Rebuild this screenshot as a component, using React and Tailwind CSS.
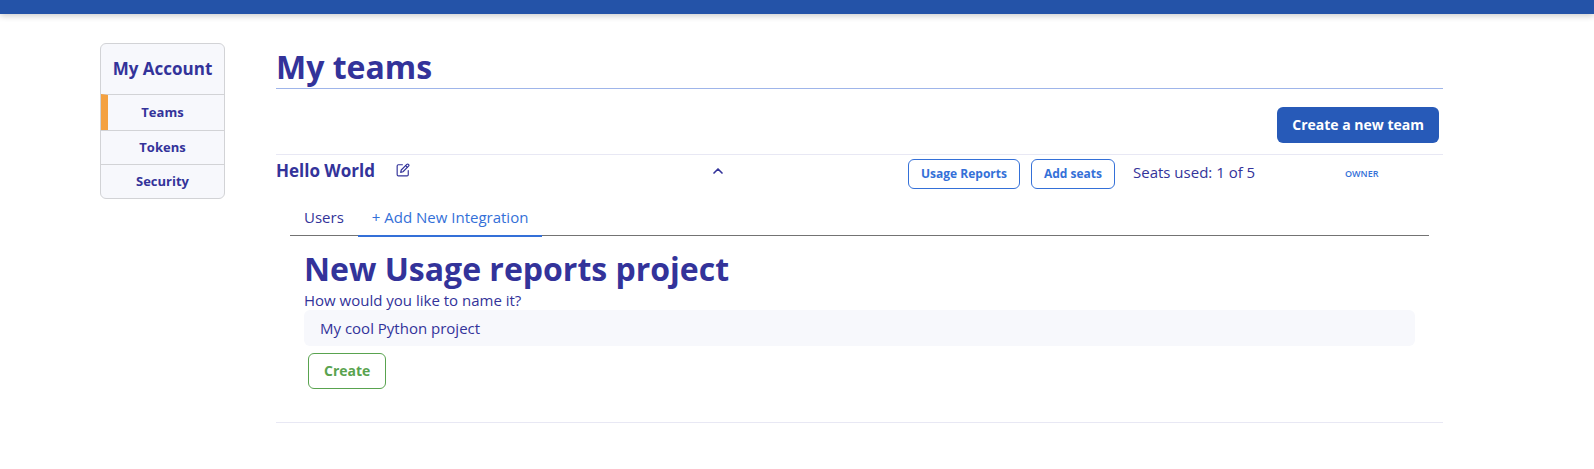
import { ChevronUp } from "lucide-react";

const accountLinks = [
  { label: "Teams", active: true },
  { label: "Tokens", active: false },
  { label: "Security", active: false },
];

function EditIcon() {
  return (
    <svg viewBox="0 0 24 24" className="size-[14px]" fill="none" stroke="currentColor" strokeWidth="2" strokeLinecap="round" strokeLinejoin="round" aria-hidden="true">
      <path d="M11 3H4a2 2 0 0 0-2 2v15a2 2 0 0 0 2 2h15a2 2 0 0 0 2-2v-7" />
      <path d="M18.500 2.500a2.120 2.120 0 0 1 3 3L12 15l-4 1 1-4 9.500-9.500z" />
      <path d="M16.500 4.500l3 3" />
    </svg>
  );
}

function Sidebar() {
  return (
    <nav aria-label="My Account" className="w-[125px] shrink-0 overflow-hidden rounded-md border border-[#d2d3d6] bg-[#f7f8fc] text-center font-bold">
      <h2 className="py-3 text-[17px] leading-[26px]">My Account</h2>
      {accountLinks.map(({ label, active }) => (
        <a
          key={label}
          href="#"
          aria-current={active ? "page" : undefined}
          className={
            active
              ? "block border-t border-l-[7px] border-t-[#d2d3d6] border-l-[#f4a140] py-[7px] pr-[7px] text-[13px] leading-[21px]"
              : "block border-t border-[#d2d3d6] py-[6px] text-[13px] leading-[21px]"
          }
        >
          {label}
        </a>
      ))}
    </nav>
  );
}

function TeamRow() {
  return (
    <div className="grid h-[38px] grid-cols-[434fr_198fr_225fr_210fr_100fr] items-center">
      <div className="flex items-center gap-[21px] pb-[6px]">
        <h2 className="text-[17px] font-bold leading-[26px]">Hello World</h2>
        <button type="button" aria-label="Rename team" className="pb-[3px]">
          <EditIcon />
        </button>
      </div>
      <button type="button" aria-label="Collapse team" className="justify-self-start pb-[6px]">
        <ChevronUp size={16} strokeWidth={2.5} />
      </button>
      <div className="flex gap-[11px] text-xs font-bold text-[#3470d8]">
        <button type="button" className="h-[30px] rounded-md border border-[#3470d8] px-3 whitespace-nowrap">Usage Reports</button>
        <button type="button" className="h-[30px] rounded-md border border-[#3470d8] px-3 whitespace-nowrap">Add seats</button>
      </div>
      <p className="pb-[4px] text-[15px]">Seats used: 1 of 5</p>
      <span className="pl-[2px] text-[9px] font-semibold text-[#3470d8]">OWNER</span>
    </div>
  );
}

function NewProject() {
  return (
    <form className="px-[14px] pt-[13px] pb-[33px]" onSubmit={(e) => e.preventDefault()}>
      <h2 className="text-[32px] leading-[40px] font-bold">New Usage reports project</h2>
      <label htmlFor="project-name" className="block pt-px text-[15px] leading-5">How would you like to name it?</label>
      <input
        id="project-name"
        type="text"
        defaultValue="My cool Python project"
        className="block h-9 w-full rounded-md bg-[#f7f8fc] px-4 text-[15px] outline-none"
      />
      <button type="submit" className="mt-[7px] ml-1 h-9 rounded-md border border-[#59a34f] px-[15px] text-sm font-bold text-[#59a34f]">
        Create
      </button>
    </form>
  );
}

export default function App() {
  return (
    <div className="min-h-screen bg-white font-['Open_Sans',sans-serif] text-[#33339a]">
      <header className="h-[14px] bg-[#2453a8] shadow-[0_2px_6px_rgba(0,0,0,0.2)]" />
      <div className="flex items-start gap-[51px] px-[100px] pt-[29px]">
        <Sidebar />
        <main className="mr-[51px] min-w-0 flex-1">
          <h1 className="border-b border-[#9fb5ea] pt-1 pb-[2px] text-[32px] leading-[39px] font-bold">My teams</h1>
          <div className="flex justify-end px-1 pt-[18px] pb-[11px]">
            <button type="button" className="h-9 rounded-md bg-[#275ab8] px-[15px] text-sm font-bold text-white">
              Create a new team
            </button>
          </div>
          <section className="border-y border-[#e8e8f4]">
            <TeamRow />
            <div className="px-[14px]">
              <div role="tablist" className="flex h-[43px] border-b border-[#737373] text-[15px]">
                <button type="button" role="tab" aria-selected="false" className="px-[14px] pt-[7px]">Users</button>
                <button type="button" role="tab" aria-selected="true" className="-mb-[2px] border-b-2 border-[#3470d8] px-[14px] pt-[7px] text-[#3470d8]">
                  + Add New Integration
                </button>
              </div>
              <NewProject />
            </div>
          </section>
        </main>
      </div>
    </div>
  );
}
